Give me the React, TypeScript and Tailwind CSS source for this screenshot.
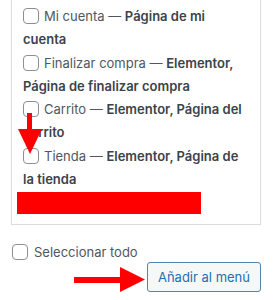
import React from 'react';

type Item = { title: string; state: string };

const items: Item[] = [
  { title: 'Mi cuenta', state: 'Página de mi cuenta' },
  { title: 'Finalizar compra', state: 'Elementor, Página de finalizar compra' },
  { title: 'Carrito', state: 'Elementor, Página del carrito' },
  { title: 'Tienda', state: 'Elementor, Página de la tienda' },
];

function Box({ className = '' }: { className?: string }) {
  return (
    <span
      className={`inline-block h-4 w-4 rounded-[4px] border border-[#8c8f94] bg-white ${className}`}
    />
  );
}

export default function App() {
  return (
    <div className="relative h-[300px] w-[274px] overflow-hidden bg-white font-['Inter',sans-serif] text-[13px]">
      <div className="ml-[11px] w-[250px]">
        <div className="border-x border-b border-[#dcdcde] pt-[5px] pb-[10px] pl-[11px]">
          <ul className="w-[221px] leading-[23.3px] text-[#50575e]">
            {items.map((item) => (
              <li key={item.title}>
                <Box className="relative top-[3px] mr-[5px]" />
                {item.title} — <span className="font-semibold text-[#3c434a]">{item.state}</span>
              </li>
            ))}
          </ul>
          <div className="mt-[1px] ml-[-6px] h-[22px] w-[184px] bg-[#ff0000]" />
        </div>

        <label className="mt-[19px] ml-[1px] flex h-4 items-center gap-[6px] text-[#50575e]">
          <Box />
          Seleccionar todo
        </label>

        <div className="mt-[2px] flex justify-end">
          <button className="h-[30px] rounded-[3px] border border-[#4f83b0] bg-[#f6f7f7] px-[10px] text-[13px] text-[#2271b1]">
            Añadir al menú
          </button>
        </div>
      </div>

      {/* red annotation arrows */}
      <svg className="absolute inset-0" width="274" height="300" viewBox="0 0 274 300">
        <rect x="27" y="113" width="5" height="17" fill="#ff0000" />
        <polygon points="18,129 42,129 30,154" fill="#ff0000" />
        <rect x="74" y="277" width="47" height="6" fill="#ff0000" />
        <polygon points="120,267 120,292 145,279.5" fill="#ff0000" />
      </svg>
    </div>
  );
}
